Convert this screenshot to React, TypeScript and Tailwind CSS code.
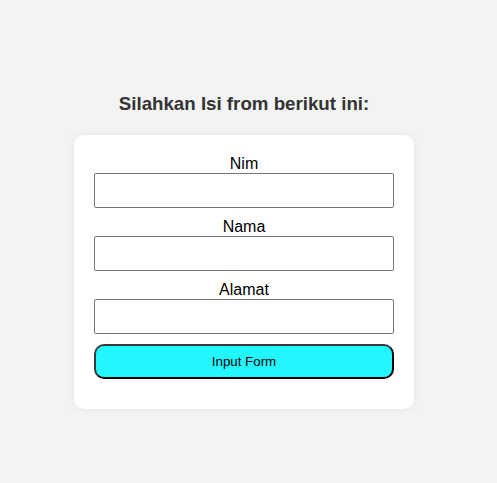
import React from "react";

export default function App() {
  const fields = ["Nim", "Nama", "Alamat"];

  return (
    <div
      className="min-h-[483px] w-full bg-[#f3f3f3] flex flex-col items-center pt-[93px] pr-[9px]"
      style={{ fontFamily: '"Liberation Sans", Arial, sans-serif' }}
    >
      <h3 className="text-[18.72px] leading-[22px] font-bold text-[#333] mb-[20px]">
        Silahkan Isi from berikut ini:
      </h3>

      <form
        onSubmit={(e) => e.preventDefault()}
        className="w-[340px] bg-white rounded-[10px] shadow-[0_0_10px_rgba(0,0,0,0.06)] px-[20px] pt-[20px] pb-[20px]"
      >
        {fields.map((f) => (
          <div key={f}>
            <label className="block text-center text-[16px] leading-[18px] text-black">{f}</label>
            <input
              type="text"
              className="block w-full h-[35px] mb-[10px] border border-[#767676] rounded-[2px] bg-white"
            />
          </div>
        ))}
        <button
          type="submit"
          className="block w-full h-[35px] mb-[10px] rounded-[10px] border-2 border-[#3a3a3a] border-b-black border-r-black bg-[#22f7ff] text-[13.33px] text-black"
        >
          Input Form
        </button>
      </form>
    </div>
  );
}
